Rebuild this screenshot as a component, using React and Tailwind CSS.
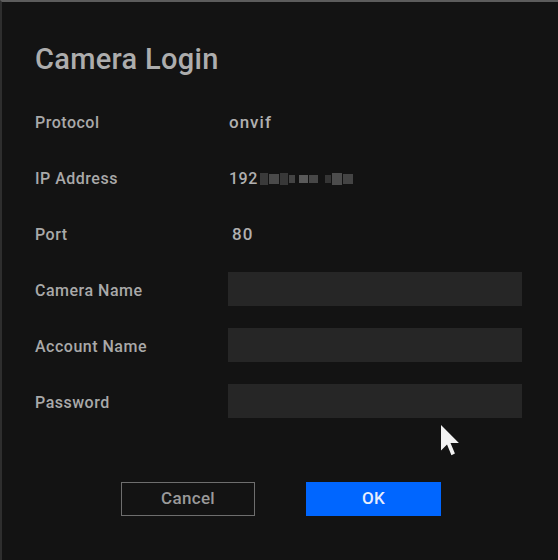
const fields = [
  { label: "Protocol", value: "onvif" },
  { label: "IP Address", ip: true },
  { label: "Port", value: "80", pad: true },
  { label: "Camera Name", input: true },
  { label: "Account Name", input: true },
  { label: "Password", input: true, type: "password" },
];

// blurred tail of the IP address
function MaskedIp() {
  return (
    <span className="flex items-center gap-[1px] ml-[2px]">
      <span className="w-[8px] h-[12px] bg-[#3a3a3a]" />
      <span className="w-[10px] h-[10px] bg-[#4a4a4a]" />
      <span className="w-[8px] h-[12px] bg-[#383838]" />
      <span className="w-[6px] h-[8px] bg-[#444]" />
      <span className="w-[9px] h-[8px] bg-[#5a5a5a] ml-[3px]" />
      <span className="w-[9px] h-[8px] bg-[#474747]" />
      <span className="w-[6px] h-[8px] bg-[#353535] ml-[6px]" />
      <span className="w-[10px] h-[12px] bg-[#4c4c4c]" />
      <span className="w-[10px] h-[10px] bg-[#444]" />
    </span>
  );
}

export default function App() {
  return (
    <div
      className="relative w-[558px] h-[560px] bg-[#131313] border-t-2 border-t-[#5c5c5c] border-l-2 border-l-[#2e2e2e] overflow-hidden"
      style={{ fontFamily: "Roboto, 'Noto Sans', sans-serif" }}
    >
      <div className="pl-[33px] pr-[36px]">
        <h1 className="mt-[41px] text-[29px] leading-[32px] font-medium tracking-[0.3px] text-[#adadad]">
          Camera Login
        </h1>

        <div className="mt-[20px]">
          {fields.map((f) => (
            <div key={f.label} className="flex items-center h-[56px]">
              <div className="w-[193px] text-[16px] font-medium tracking-[0.5px] text-[#a9a9a9]">
                {f.label}
              </div>
              {f.input ? (
                <input
                  type={f.type || "text"}
                  className="flex-1 h-[34px] -mt-[4px] bg-[#262626] outline-none px-2 text-[15px] text-[#ccc]"
                />
              ) : f.ip ? (
                <div className="flex items-center text-[16px] font-medium tracking-[0.5px] text-[#b0b0b0] pl-[1px]">
                  192
                  <MaskedIp />
                </div>
              ) : (
                <div
                  className={
                    "text-[17px] font-medium tracking-[1px] text-[#b0b0b0] " +
                    (f.pad ? "pl-[4px]" : "pl-[1px]")
                  }
                >
                  {f.value}
                </div>
              )}
            </div>
          ))}
        </div>

        <div className="flex mt-[51px] ml-[86px] gap-[51px]">
          <button className="w-[134px] h-[34px] border border-[#6e6e6e] text-[17px] font-medium tracking-[0.3px] text-[#9a9a9a]">
            Cancel
          </button>
          <button className="w-[135px] h-[34px] bg-[#0066ff] text-[17px] font-medium tracking-[0.3px] text-[#e8eefc]">
            OK
          </button>
        </div>
      </div>

      {/* mouse pointer */}
      <svg
        className="absolute left-[439px] top-[423px]"
        width="19"
        height="31"
        viewBox="0 0 12 19.5"
      >
        <path d="M0 0 L0 16 L3.8 12.3 L6.6 19 L8.8 18 L6 11.4 L11.3 11.4 Z" fill="#f2f2f2" />
      </svg>
    </div>
  );
}
